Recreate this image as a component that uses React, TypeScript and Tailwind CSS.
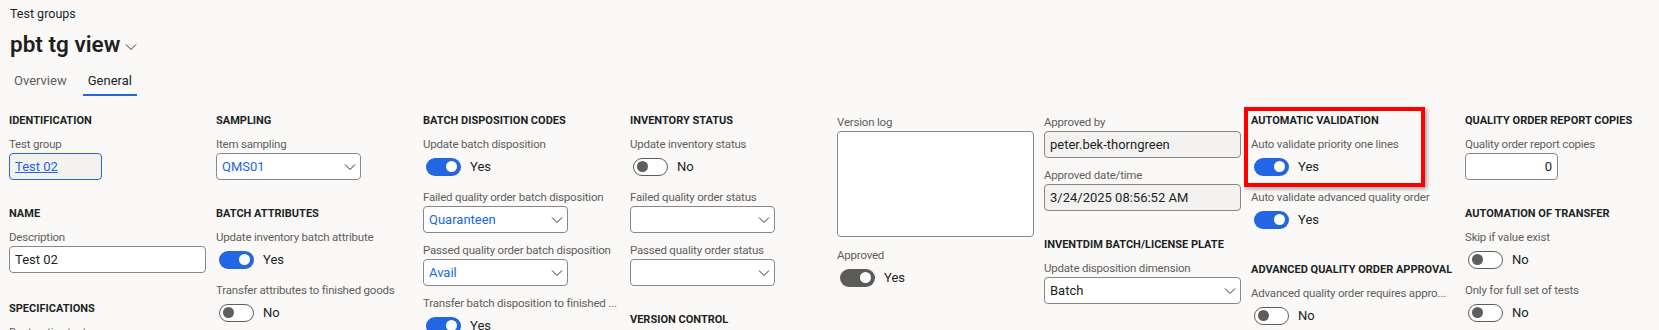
import React from 'react';

const font = "font-['Roboto','Segoe_UI',sans-serif]";

const Chevron = ({ className = '' }: { className?: string }) => (
  <svg width="12" height="8" viewBox="0 0 12 8" className={className} fill="none">
    <path d="M1 1.5 L6 6.5 L11 1.5" stroke="#323130" strokeWidth="1" />
  </svg>
);

const Header = ({ children, className = '' }: { children: React.ReactNode; className?: string }) => (
  <div className={`h-5 leading-5 text-[11px] font-bold uppercase text-[#201f1e] whitespace-nowrap ${className}`}>{children}</div>
);

const Label = ({ children, className = '' }: { children: React.ReactNode; className?: string }) => (
  <div className={`h-[18px] leading-[18px] text-[11.5px] tracking-[-0.2px] text-[#605e5c] whitespace-nowrap ${className}`}>
    {children}
  </div>
);

const Toggle = ({ on, gray }: { on: boolean; gray?: boolean }) => (
  <div className="h-[27px] flex items-center pl-[3px] mb-2">
    {on ? (
      <div className={`w-[35px] h-[18px] rounded-full flex items-center justify-end pr-[4px] ${gray ? 'bg-[#5c5b5a]' : 'bg-[#2266e3]'}`}>
        <div className="w-[11px] h-[11px] rounded-full bg-white" />
      </div>
    ) : (
      <div className="w-[35px] h-[18px] rounded-full border border-[#605e5c] bg-white flex items-center pl-[3px]">
        <div className="w-[11px] h-[11px] rounded-full bg-[#605e5c]" />
      </div>
    )}
    <span className="ml-[9px] text-[13px] text-[#201f1e]">{on ? 'Yes' : 'No'}</span>
  </div>
);

const Select = ({ value, width, blue }: { value?: string; width: string; blue?: boolean }) => (
  <div className={`${width} h-[27px] mb-2 bg-white border border-[#8a8886] rounded-[4px] flex items-center justify-between pl-[5px] pr-[4px]`}>
    <span className={`text-[13px] ${blue ? 'text-[#2266e3]' : 'text-[#201f1e]'}`}>{value}</span>
    <Chevron />
  </div>
);

const Input = ({ value, width, gray, right }: { value: string; width: string; gray?: boolean; right?: boolean }) => (
  <div
    className={`${width} h-[27px] mb-2 border border-[#8a8886] rounded-[4px] flex items-center px-[5px] text-[13px] text-[#201f1e] ${
      gray ? 'bg-[#f3f2f1]' : 'bg-white'
    } ${right ? 'justify-end' : ''}`}
  >
    {value}
  </div>
);

export default function App() {
  return (
    <div className={`w-[1659px] h-[330px] overflow-hidden bg-[#faf9f8] ${font}`}>
      <div className="pl-[10px] pt-[5px] h-[23px] leading-[18px] text-[12.5px] text-[#201f1e]">Test groups</div>
      <div className="pl-[10px] h-[42px] flex items-center">
        <span className="text-[22.5px] font-semibold text-[#201f1e] leading-8">pbt tg view</span>
        <Chevron className="ml-[5px] mt-[6px]" />
      </div>
      <div className="flex pl-[14px] h-[31px] items-end">
        <div className="h-[26px] leading-[22px] text-[13px] text-[#605e5c]">Overview</div>
        <div className="ml-[16px] px-[5px] h-[26px] leading-[22px] text-[13px] text-[#201f1e] border-b-2 border-[#2266e3]">
          General
        </div>
      </div>

      <div className="flex pl-[9px] pt-[15px]">
        {/* col 1 */}
        <div className="w-[207px] shrink-0 flex flex-col">
          <Header>Identification</Header>
          <Label className="mt-1">Test group</Label>
          <div className="w-[93px] h-[27px] mb-2 bg-[#f3f2f1] border border-[#2266e3] rounded-[4px] flex items-center px-[5px]">
            <span className="text-[13px] text-[#2266e3] underline">Test 02</span>
          </div>
          <Header className="mt-4">Name</Header>
          <Label className="mt-1">Description</Label>
          <Input value="Test 02" width="w-[197px]" />
          <Header className="mt-[18px]">Specifications</Header>
          <Label className="mt-1">Destructive test</Label>
        </div>

        {/* col 2 */}
        <div className="w-[207px] shrink-0 flex flex-col">
          <Header>Sampling</Header>
          <Label className="mt-1">Item sampling</Label>
          <Select value="QMS01" width="w-[145px]" blue />
          <Header className="mt-4">Batch attributes</Header>
          <Label className="mt-1">Update inventory batch attribute</Label>
          <Toggle on />
          <Label>Transfer attributes to finished goods</Label>
          <Toggle on={false} />
        </div>

        {/* col 3 */}
        <div className="w-[207px] shrink-0 flex flex-col">
          <Header>Batch disposition codes</Header>
          <Label className="mt-1">Update batch disposition</Label>
          <Toggle on />
          <Label>Failed quality order batch disposition</Label>
          <Select value="Quaranteen" width="w-[145px]" blue />
          <Label>Passed quality order batch disposition</Label>
          <Select value="Avail" width="w-[145px]" blue />
          <Label>Transfer batch disposition to finished ...</Label>
          <Toggle on />
        </div>

        {/* col 4 */}
        <div className="w-[207px] shrink-0 flex flex-col">
          <Header>Inventory status</Header>
          <Label className="mt-1">Update inventory status</Label>
          <Toggle on={false} />
          <Label>Failed quality order status</Label>
          <Select width="w-[145px]" />
          <Label>Passed quality order status</Label>
          <Select width="w-[145px]" />
          <Header className="mt-4">Version control</Header>
        </div>

        {/* col 5 */}
        <div className="w-[207px] shrink-0 pt-[2px] flex flex-col">
          <Label>Version log</Label>
          <div className="w-[197px] h-[106px] mb-[9px] bg-white border border-[#8a8886] rounded-[4px]" />
          <Label>Approved</Label>
          <Toggle on gray />
        </div>

        {/* col 6 */}
        <div className="w-[207px] shrink-0 pt-[2px] flex flex-col">
          <Label>Approved by</Label>
          <Input value="peter.bek-thorngreen" width="w-[197px]" gray />
          <Label>Approved date/time</Label>
          <Input value="3/24/2025 08:56:52 AM" width="w-[197px]" gray />
          <Header className="mt-4">InventDim batch/license plate</Header>
          <Label className="mt-1">Update disposition dimension</Label>
          <Select value="Batch" width="w-[197px]" />
        </div>

        {/* col 7 */}
        <div className="w-[214px] shrink-0 flex flex-col">
          <div className="relative flex flex-col">
            <Header>Automatic validation</Header>
            <Label className="mt-1">Auto validate priority one lines</Label>
            <Toggle on />
            <div className="absolute left-[-7px] top-[-4px] w-[181px] h-[80px] border-4 border-[#ff0000] shadow-[2px_2px_4px_rgba(0,0,0,0.35)] pointer-events-none" />
          </div>
          <Label>Auto validate advanced quality order</Label>
          <Toggle on />
          <Header className="mt-[19px]">Advanced quality order approval</Header>
          <Label className="mt-1">Advanced quality order requires appro...</Label>
          <Toggle on={false} />
        </div>

        {/* col 8 */}
        <div className="w-[194px] shrink-0 flex flex-col">
          <Header>Quality order report copies</Header>
          <Label className="mt-1">Quality order report copies</Label>
          <Input value="0" width="w-[93px]" right />
          <Header className="mt-4">Automation of transfer</Header>
          <Label className="mt-1">Skip if value exist</Label>
          <Toggle on={false} />
          <Label>Only for full set of tests</Label>
          <Toggle on={false} />
        </div>
      </div>
    </div>
  );
}
